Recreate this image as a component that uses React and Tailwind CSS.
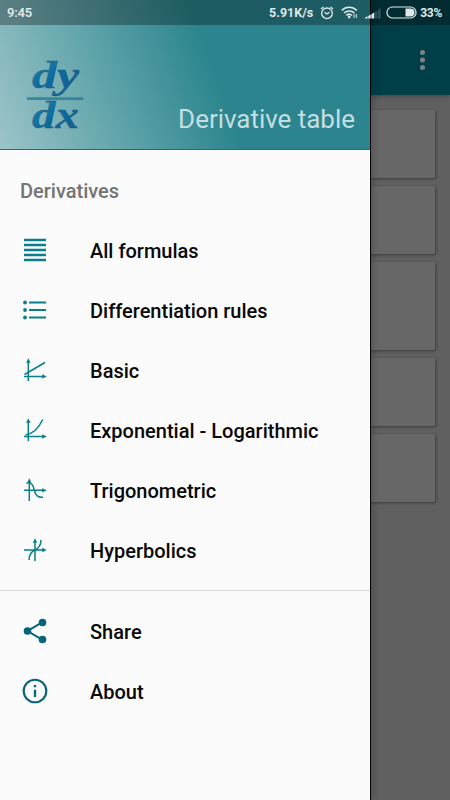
import React from "react";

const axes = (cx, cy) => (
  <>
    <path d={`M${cx} 23V3M1 ${cy}H21`} />
    <path d={`M${cx - 1} 4L${cx} 2L${cx + 1} 4ZM20 ${cy - 1}L22 ${cy}L20 ${cy + 1}Z`} />
  </>
);

const LinesIcon = () => (
  <path d="M1 2H23M1 7H23M1 12H23M1 17H23M1 22H23" strokeWidth="2.3" />
);

const ListIcon = () => (
  <>
    <path d="M6 4.5H23M6 12H23M6 19.5H23" strokeWidth="2.2" />
    <g fill="currentColor" stroke="none">
      <circle cx="2" cy="4.5" r="1.9" />
      <circle cx="2" cy="12" r="1.9" />
      <circle cx="2" cy="19.5" r="1.9" />
    </g>
  </>
);

const BasicIcon = () => (
  <>
    {axes(5.3, 18.5)}
    <path d="M1.5 16.5L22 4.5" />
  </>
);

const ExpIcon = () => (
  <>
    {axes(5.3, 18.5)}
    <path d="M2.5 17C11 15.5 16 9.5 19.7 1.5" />
  </>
);

const TrigIcon = () => (
  <>
    {axes(6.3, 12.3)}
    <path d="M3.5 5.2C8 3.5 10.5 7.5 11.3 12S15 20 20 19.2" />
  </>
);

const HyperIcon = () => (
  <>
    {axes(12, 12)}
    <path d="M6 22C6 16 8.5 13.7 12 12S18 7.5 18 2" />
  </>
);

const ShareIcon = () => (
  <>
    <path d="M19.5 3.2L4.5 12L19.5 20.8" strokeWidth="2" />
    <g fill="currentColor" stroke="none">
      <circle cx="19.5" cy="3.5" r="3.8" />
      <circle cx="4.5" cy="12" r="3.8" />
      <circle cx="19.5" cy="20.5" r="3.8" />
    </g>
  </>
);

const AboutIcon = () => (
  <>
    <circle cx="12" cy="12" r="11.3" strokeWidth="2.1" />
    <path d="M12 10.8V18M12 6V8.3" strokeWidth="2.3" />
  </>
);

const FORMULAS = [
  { label: "All formulas", Icon: LinesIcon },
  { label: "Differentiation rules", Icon: ListIcon },
  { label: "Basic", Icon: BasicIcon },
  { label: "Exponential - Logarithmic", Icon: ExpIcon },
  { label: "Trigonometric", Icon: TrigIcon },
  { label: "Hyperbolics", Icon: HyperIcon },
];

const MORE = [
  { label: "Share", Icon: ShareIcon },
  { label: "About", Icon: AboutIcon },
];

function MenuItem({ label, Icon, dark }) {
  return (
    <button type="button" className="flex h-[60px] w-full items-center pl-[23px] text-left">
      <svg
        viewBox="0 0 24 24"
        className={[
          "h-6 w-6 shrink-0 overflow-visible",
          dark ? "text-[#056477]" : "text-[#087f8a]",
        ].join(" ")}
        fill="none"
        stroke="currentColor"
        strokeWidth="1.5"
      >
        <Icon />
      </svg>
      <span className="ml-[43px] whitespace-nowrap pt-0.5 text-[20px] font-medium leading-6 text-[#080808]">
        {label}
      </span>
    </button>
  );
}

function StatusBar() {
  return (
    <div className="absolute inset-x-0 top-0 z-20 flex h-[25px] items-center justify-between bg-black/30 pl-[7px] pr-2 text-[13px] font-bold leading-none text-[#e0e8e9]">
      <span className="font-semibold tracking-[-0.2px]">9:45</span>
      <div className="flex items-center">
        <span className="pt-0.5 text-[12.5px]">5.91K/s</span>
        {/* alarm */}
        <svg width="14" height="14" viewBox="0 0 14 14" className="ml-[7px]" fill="none" stroke="currentColor" strokeWidth="1.3">
          <circle cx="7" cy="7.3" r="5.3" />
          <path d="M4.5 6.2L7 8L9.5 6.2M1 3L3.5 1M13 3L10.5 1" />
        </svg>
        {/* wifi */}
        <svg width="17" height="13" viewBox="0 0 17 13" className="ml-[7px]" fill="none" stroke="currentColor" strokeWidth="1.5">
          <path d="M.7 4.4C5 .2 11.5.2 15.8 4.4M3 7C6 4.2 10.5 4.2 13.5 7M5.3 9.4C7.2 7.8 9.3 7.8 11 9.4" />
          <circle cx="8.2" cy="11" r="1.4" fill="currentColor" stroke="none" />
          <path d="M13 8V12M15.3 8V12" strokeWidth="1" />
        </svg>
        {/* signal */}
        <svg width="16" height="12" viewBox="0 0 16 12" className="ml-[7px]" fill="currentColor">
          <path d="M0 11.5V10.5L2.6 9.2V11.5ZM3.2 11.5V8.9L5.8 7.5V11.5ZM6.4 11.5V7.2L9.2 5.5V11.5Z" />
          <path d="M9.9 11.5V5L12.4 3.4V11.5ZM13.1 11.5V2.8L15.7 1V11.5Z" opacity=".22" />
        </svg>
        {/* battery */}
        <svg width="31" height="13" viewBox="0 0 31 13" className="ml-[5px]" fill="none">
          <rect x="1" y="1" width="29" height="11" rx="5.3" stroke="currentColor" strokeWidth="1.2" />
          <path d="M19.5 2.5H24.5A4 4 0 0 1 24.5 10.5H19.5Z" fill="currentColor" />
        </svg>
        <span className="ml-[3px] text-[12px] tracking-[-0.3px]">33%</span>
      </div>
    </div>
  );
}

function Logo() {
  return (
    <svg width="60" height="76" viewBox="0 0 60 76" className="overflow-visible">
      <defs>
        <linearGradient id="ink" x1="0" y1="0" x2="1" y2="1">
          <stop offset="0" stopColor="#2a83ac" />
          <stop offset="0.5" stopColor="#0a6b9f" />
          <stop offset="1" stopColor="#1a5c88" />
        </linearGradient>
      </defs>
      <g
        fontFamily="Liberation Serif, serif"
        fontStyle="italic"
        fontWeight="bold"
        fontSize="37"
        fill="url(#ink)"
        stroke="#2b5378"
        strokeWidth="0.3"
      >
        <text x="6" y="28.5" textLength="47" lengthAdjust="spacingAndGlyphs">dy</text>
        <text x="6" y="69" textLength="47" lengthAdjust="spacingAndGlyphs">dx</text>
      </g>
      <path d="M1 39.5H57" stroke="#28708b" strokeWidth="2.4" />
      <path d="M1 39H56" stroke="#47a3b1" strokeWidth="1" />
    </svg>
  );
}

function Drawer() {
  return (
    <aside className="absolute inset-y-0 left-0 z-10 flex w-[371px] flex-col border-r border-black bg-[#fbfbfb] shadow-[2px_0_8px_rgba(0,0,0,0.2)]">
      <header className="flex h-[150px] shrink-0 items-end justify-between border-b border-[#087887] bg-[linear-gradient(70deg,#9bc4c8_0%,#65a7ad_27%,#2c858e_57%,#2c858e_100%)] pl-[26px] pr-[15px]">
        <div className="mb-[14px]">
          <Logo />
        </div>
        <h1 className="mb-[14px] whitespace-nowrap text-[26px] leading-8 tracking-[-0.03px] text-[#c4dee2]">
          Derivative table
        </h1>
      </header>
      <nav>
        <h2 className="flex h-[70px] items-center pl-5 pt-3 text-[20px] font-medium leading-6 text-[#747474]">
          Derivatives
        </h2>
        {FORMULAS.map((item) => (
          <MenuItem key={item.label} {...item} />
        ))}
        <div className="mt-[10px] border-t border-[#d5d5d5] pt-[10px]">
          {MORE.map((item) => (
            <MenuItem key={item.label} {...item} dark />
          ))}
        </div>
      </nav>
    </aside>
  );
}

const CARDS = ["h-[68px]", "h-[68px]", "h-[88px]", "h-[68px]", "h-[68px]"];

export default function App() {
  return (
    <div className="relative h-[800px] w-[450px] overflow-hidden bg-[#606060] font-[Roboto,sans-serif]">
      <div className="relative flex h-[95px] items-end justify-end bg-[#003f47] pb-[25px] pr-[25px] shadow-[0_2px_4px_rgba(0,0,0,0.25)]">
        <svg width="5" height="20" viewBox="0 0 5 20" fill="#7b8385">
          <circle cx="2.5" cy="2.5" r="2.5" />
          <circle cx="2.5" cy="10" r="2.5" />
          <circle cx="2.5" cy="17.5" r="2.5" />
        </svg>
      </div>
      <main className="flex flex-col gap-2 pl-[15px] pr-[15px] pt-[15px]">
        {CARDS.map((height, i) => (
          <div
            key={i}
            className={["rounded-[1px] bg-[#676767] shadow-[1px_1px_3px_rgba(0,0,0,0.4)]", height].join(" ")}
          />
        ))}
      </main>
      <Drawer />
      <StatusBar />
    </div>
  );
}
